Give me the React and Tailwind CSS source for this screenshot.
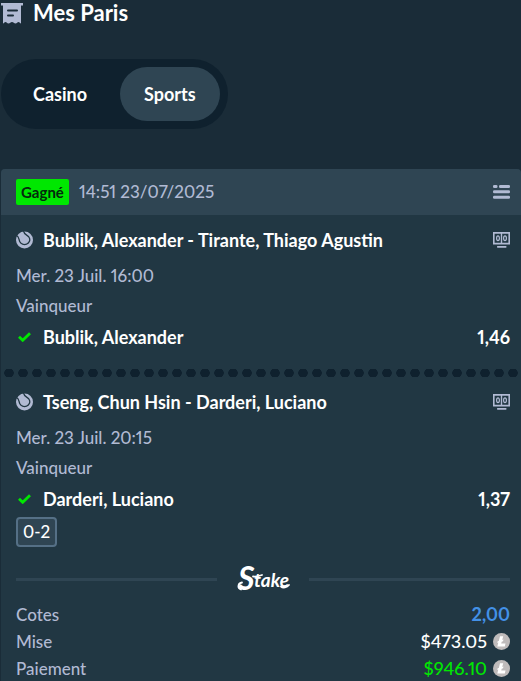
import { useState } from 'react';

const tabs = ['Casino', 'Sports'];

const legs = [
  {
    id: 1,
    match: 'Bublik, Alexander - Tirante, Thiago Agustin',
    date: 'Mer. 23 Juil. 16:00',
    market: 'Vainqueur',
    pick: 'Bublik, Alexander',
    odds: '1,46',
  },
  {
    id: 2,
    match: 'Tseng, Chun Hsin - Darderi, Luciano',
    date: 'Mer. 23 Juil. 20:15',
    market: 'Vainqueur',
    pick: 'Darderi, Luciano',
    odds: '1,37',
    score: '0-2',
  },
];

const BetsIcon = () => (
  <svg className="w-[22px] h-[21px] shrink-0" viewBox="0 0 22 21" aria-hidden="true">
    <path
      fill="#b1bad3"
      fillRule="evenodd"
      d="M0 0h22v2.500h-2V20.500c-1 0-1.300-1.500-2.500-1.500S16 20.500 14.500 20.500 12.500 19 11 19 9 20.500 7.500 20.500 5.700 19 4.500 19 3 20.500 2 20.500V2.500H0zM7 6.500a1 1 0 0 0 0 2h9a1 1 0 0 0 0-2zM7 11.500a1 1 0 0 0 0 2h5a1 1 0 0 0 0-2z"
    />
  </svg>
);

const ListIcon = () => (
  <svg className="w-[17px] h-[14px]" viewBox="0 0 17 14" fill="#b1bad3" aria-hidden="true">
    <rect x="0" y="0" width="4.500" height="3" rx="1.300" />
    <rect x="6" y="0" width="11" height="3" rx="1.300" />
    <rect x="0" y="5.300" width="17" height="3" rx="1.300" />
    <rect x="0" y="10.700" width="17" height="3" rx="1.300" />
  </svg>
);

const TennisIcon = () => (
  <svg className="w-[17px] h-[18px] shrink-0" viewBox="0 0 17 18" aria-hidden="true">
    <circle cx="8.500" cy="9" r="8.500" fill="#b1bad3" />
    <path
      d="M0.500 4.500C3 5.500 2.800 8 3.700 10.500C4.800 13.200 8 14 10.500 13.200C13.500 12 14.500 9 13.200 6.500C12 4 8.500 4.500 7.500 0"
      fill="none"
      stroke="#213743"
      strokeWidth="1.300"
    />
  </svg>
);

const ScoreboardIcon = () => (
  <svg className="w-[17px] h-[16px]" viewBox="0 0 17 16" fill="none" aria-hidden="true">
    <path
      fill="#b1bad3"
      fillRule="evenodd"
      d="M0 0h17v12.500H0zM1.600 1.800v9h6.200v-9zM9.200 1.800v9h6.200v-9z"
    />
    <ellipse cx="5" cy="6.300" rx="1.400" ry="2.400" stroke="#b1bad3" strokeWidth="1.200" />
    <ellipse cx="12" cy="6.300" rx="1.400" ry="2.400" stroke="#b1bad3" strokeWidth="1.200" />
    <rect x="4" y="14" width="9.500" height="1.700" rx="0.600" fill="#b1bad3" />
  </svg>
);

const CheckIcon = () => (
  <svg className="w-[13px] h-[10px]" viewBox="0 0 13 10" fill="none" aria-hidden="true">
    <path d="M1 4.800L4.700 8.300L12 1.300" stroke="#00e701" strokeWidth="2.800" />
  </svg>
);

const CoinIcon = () => (
  <svg className="w-[17px] h-[17px] shrink-0" viewBox="0 0 17 17" aria-hidden="true">
    <circle cx="8.500" cy="8.500" r="8.500" fill="#bfbbbb" />
    <path
      fill="#ffffff"
      d="M7 3.300h3.200l-1 3.700 1.300-.5-.5 1.700-1.300.5-.5 1.800h4.300l-.7 2.900H4.300l1-3.800-1.100.4.500-1.700 1.100-.4z"
    />
  </svg>
);

const StakeLogo = () => (
  <svg className="w-[52px] h-[28px] shrink-0 overflow-visible" viewBox="0 0 52 28" role="img" aria-label="Stake">
    <g fill="#ffffff" className="font-['Lato'] font-bold italic">
      <text x="1" y="25" className="text-[32px]">S</text>
      <text x="17" y="22" className="text-[19px]">take</text>
    </g>
    <g fill="none" stroke="#ffffff" strokeWidth="1.800" strokeLinecap="round">
      <path d="M5 17.500C1 18 0 23 4 24.500" />
      <path d="M16 11.500C19 12 22 11 25 10" />
      <path d="M44 21.500C46 23.500 50 22.500 52 20" />
    </g>
  </svg>
);

const Leg = ({ leg }) => (
  <div className="pr-[11px] pl-[15px]">
    <div className="flex items-center justify-between">
      <div className="flex items-center gap-[10px] text-lg/6 font-bold text-white">
        <TennisIcon />
        <span>{leg.match}</span>
      </div>
      <button type="button" aria-label="Tableau des scores">
        <ScoreboardIcon />
      </button>
    </div>
    <div className="mt-3">{leg.date}</div>
    <div className="mt-[6px]">{leg.market}</div>
    <div className="mt-[7px] flex items-center text-lg/6 font-bold text-white">
      <span className="w-[27px] pl-[2px]">
        <CheckIcon />
      </span>
      <span className="flex-1">{leg.pick}</span>
      <span>{leg.odds}</span>
    </div>
    {leg.score && (
      <div className="mt-[6px] flex">
        <span className="rounded border-2 border-[#557086] bg-[#2f4553] px-[5px] py-px text-white">
          {leg.score}
        </span>
      </div>
    )}
  </div>
);

const App = () => {
  const [activeTab, setActiveTab] = useState('Sports');

  return (
    <div className="min-h-screen bg-[#1a2c38] pl-px font-['Lato',sans-serif] text-[17px] leading-6 font-medium proportional-nums text-[#b1bad3]">
      <h1 className="flex items-center gap-[10px] text-[22px] leading-[26px] font-bold text-white">
        <BetsIcon />
        Mes Paris
      </h1>

      <div className="mt-[33px] flex w-fit gap-[9px] rounded-full bg-[#0f212e] p-2">
        {tabs.map(tab => (
          <button
            key={tab}
            type="button"
            onClick={() => setActiveTab(tab)}
            className={`h-[54px] rounded-full px-6 text-lg font-bold text-white ${activeTab === tab ? 'bg-[#2f4553]' : ''}`}
          >
            {tab}
          </button>
        ))}
      </div>

      <div className="mt-10 rounded-t bg-[#213743]">
        <div className="flex h-[46px] items-center rounded-t bg-[#2f4553] pr-[11px] pl-[15px]">
          <span className="rounded-xs bg-[#00e701] px-[5px] py-px text-[15px] font-bold text-[#05290d]">
            Gagné
          </span>
          <span className="ml-[10px] flex-1">14:51 23/07/2025</span>
          <button type="button" aria-label="Détails du pari">
            <ListIcon />
          </button>
        </div>

        <div className="pt-[13px]">
          {legs.map((leg, i) => (
            <div key={leg.id}>
              {i > 0 && (
                <div className="mt-5 mb-[13px] ml-px h-2 bg-[radial-gradient(circle_5px,#0f212e_90%,transparent_100%)] bg-[length:14px_8px]" />
              )}
              <Leg leg={leg} />
            </div>
          ))}
        </div>

        <div className="mt-[18px] flex items-center gap-5 pr-[11px] pl-[15px]">
          <span className="h-[3px] flex-1 bg-[#2f4553]" />
          <StakeLogo />
          <span className="h-[3px] flex-1 bg-[#2f4553]" />
        </div>

        <dl className="mt-2 pr-[11px] pl-[15px] leading-[27px]">
          <div className="flex justify-between">
            <dt>Cotes</dt>
            <dd className="text-lg/[27px] font-bold text-[#4391e7]">2,00</dd>
          </div>
          <div className="flex justify-between">
            <dt>Mise</dt>
            <dd className="flex items-center gap-[6px] text-lg/[27px] text-white">
              $473.05
              <CoinIcon />
            </dd>
          </div>
          <div className="flex justify-between">
            <dt>Paiement</dt>
            <dd className="flex items-center gap-[6px] text-lg/[27px] text-[#00e701]">
              $946.10
              <CoinIcon />
            </dd>
          </div>
        </dl>
      </div>
    </div>
  );
};

export default App;
